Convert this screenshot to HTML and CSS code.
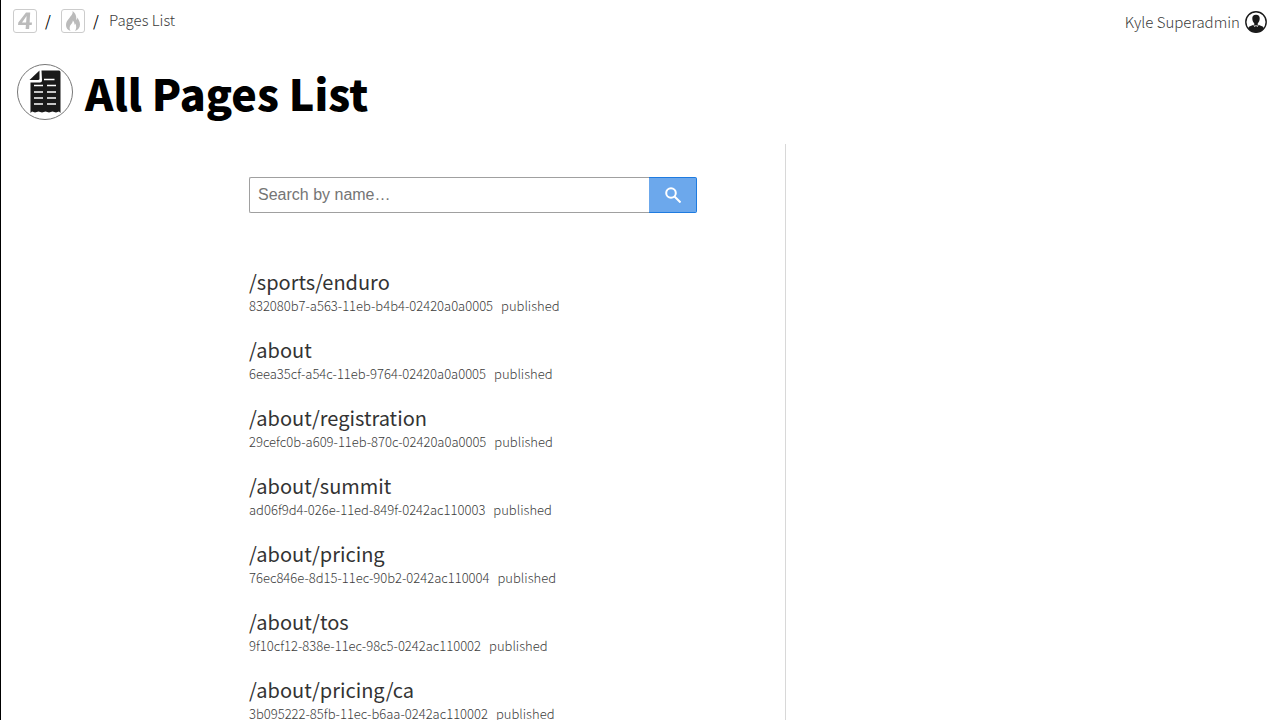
FILE: index.html
```html
<!DOCTYPE html>
<html lang="en">
<head>
<meta charset="utf-8">
<meta name="viewport" content="width=device-width, initial-scale=1">
<title>All Pages List</title>
<link rel="stylesheet" href="styles.css">
</head>
<body>
<header class="topbar">
  <nav class="breadcrumbs" aria-label="Breadcrumb">
    <a class="crumb-icon" href="#" aria-label="Home">
      <svg viewBox="0 0 22 22" aria-hidden="true"><path class="four" fill-rule="evenodd" d="M12 2.500H16.200L15.600 12.500H18L17.700 15H15.400L15.100 19H11.600L11.900 15H4L4.300 12.500zM12.600 6L8 12.500H12.100z"/></svg>
    </a>
    <span class="separator">/</span>
    <a class="crumb-icon" href="#" aria-label="Clay">
      <svg viewBox="1 1 22 22" aria-hidden="true"><path class="flame" d="M11.500 2c.8 3.200-1.800 5-3.300 7.200C6.500 11.200 5 13 5 16c0 3 1.600 5 4.500 6-1.500-2.500-1-5 .8-7 1-1.200 1.500-2.200 1.500-3.500 1.200 1.300 1.800 2.700 1.700 4.200.5-.4.800-.8.900-1.300 1.300 2.500 1 5.500-.4 7.600 3.100-1 5-3.500 5-6.500 0-2.800-1.500-4.800-2.500-7-.2 1.200-.5 2-1.200 2.500C15.500 7.500 15 4.500 11.500 2z"/></svg>
    </a>
    <span class="separator">/</span>
    <span class="crumb-text">Pages List</span>
  </nav>
  <a class="user" href="#">Kyle Superadmin
    <svg viewBox="0 0 22 22" aria-hidden="true"><circle cx="11" cy="11" r="10.200" fill="#fff" stroke="#1a1a1a" stroke-width="1.400"/><path fill="#1a1a1a" d="M11 3.700c2.500 0 3.900 1.600 3.700 4-.1 2.100-1 3.700-2 4.700v1.200l4.300 1.600c1 .4 1.400 1 1.600 2C16.800 19.800 14 21.200 11 21.200S5.200 19.800 3.400 17.200c.2-1 .6-1.600 1.600-2l4.300-1.600v-1.200c-1-1-1.900-2.600-2-4.700-.2-2.400 1.200-4 3.700-4z"/><path fill="none" stroke="#fff" stroke-width=".8" d="M8.500 13.200l1 2.300 1.500-1 1.500 1 1-2.300"/></svg>
  </a>
</header>
<div class="page-title">
  <svg viewBox="0 0 56 56" aria-hidden="true">
    <circle cx="28" cy="28" r="27.500" fill="#fff" stroke="#777"/>
    <path fill="#1a1a1a" d="M24.500 6.500h17.500Q43.500 6.500 43.500 8.500V49l-1.500-1.500-3 1-3.500-1-3.500 1-3.500-1-3.500 1-3.500-1-3.500 1-3-1-1.500 1.500V18.500h9.500q2 0 2-2z"/>
    <path fill="#1a1a1a" d="M22.500 6.500V14.500q0 1.500-1.500 1.500H12.500z"/>
    <path fill="none" stroke="#fff" stroke-width="1.600" d="M27 15.500h10.500M17 21.500h9M30 21.500h9M17 28h9M30 28h9M17 34h9M30 34h9M17 40h9M30 40h9"/>
  </svg>
  <h1>All Pages List</h1>
</div>
<div class="layout">
  <main class="content">
    <form class="search" role="search">
      <input type="search" placeholder="Search by name…" aria-label="Search by name">
      <button type="button" aria-label="Search">
        <svg viewBox="0 0 16 16" aria-hidden="true"><circle cx="6" cy="6" r="4.800"/><path d="M9.500 9.500l6 6"/></svg>
      </button>
    </form>
    <ul class="pages">
      <li><a href="#">/sports/enduro</a><div class="meta"><span>832080b7-a563-11eb-b4b4-02420a0a0005</span><span>published</span></div></li>
      <li><a href="#">/about</a><div class="meta"><span>6eea35cf-a54c-11eb-9764-02420a0a0005</span><span>published</span></div></li>
      <li><a href="#">/about/registration</a><div class="meta"><span>29cefc0b-a609-11eb-870c-02420a0a0005</span><span>published</span></div></li>
      <li><a href="#">/about/summit</a><div class="meta"><span>ad06f9d4-026e-11ed-849f-0242ac110003</span><span>published</span></div></li>
      <li><a href="#">/about/pricing</a><div class="meta"><span>76ec846e-8d15-11ec-90b2-0242ac110004</span><span>published</span></div></li>
      <li><a href="#">/about/tos</a><div class="meta"><span>9f10cf12-838e-11ec-98c5-0242ac110002</span><span>published</span></div></li>
      <li><a href="#">/about/pricing/ca</a><div class="meta"><span>3b095222-85fb-11ec-b6aa-0242ac110002</span><span>published</span></div></li>
    </ul>
  </main>
  <aside class="sidebar"></aside>
</div>
</body>
</html>
```
FILE: styles.css
```css
* { box-sizing: border-box; }
html { height: 100%; }
body {
  display: flex;
  flex-direction: column;
  height: 100vh;
  margin: 0;
  overflow: hidden;
  border-left: 1px solid #000;
  background: #fff;
  color: #000;
  font-family: "Noto Sans CJK SC", sans-serif;
  font-size: 15px;
  line-height: 20px;
}
a { color: inherit; text-decoration: none; }
svg { display: block; flex: none; }
.topbar {
  display: flex;
  justify-content: space-between;
  align-items: center;
  flex: none;
  height: 44px;
  padding: 0 13px 0 12px;
}
.breadcrumbs { display: flex; align-items: center; gap: 8px; padding-bottom: 2px; }
.crumb-icon { width: 24px; height: 24px; border: 1px solid #ccc; border-radius: 3px; }
.crumb-icon svg { width: 22px; height: 22px; }
.four, .flame { fill: #bbb; }
.separator { width: 8px; }
.crumb-text, .user { color: #3c3c3c; font-weight: 300; }
.crumb-text { padding-bottom: 2px; }
.user { display: flex; align-items: center; gap: 5px; }
.user svg { width: 22px; height: 22px; }
.page-title {
  display: flex;
  align-items: center;
  flex: none;
  gap: 12px;
  height: 100px;
  padding: 0 16px 4px;
}
.page-title svg { width: 56px; height: 56px; }
h1 { margin: 0; font-size: 43px; font-weight: 900; line-height: 56px; }
.layout { display: flex; flex: 1; min-height: 0; }
.content { flex: 1; max-width: 785px; padding: 33px 88px 0 248px; overflow: hidden; border-right: 1px solid #d8d8d8; }
.sidebar { flex: 0 1 494px; }
.search { display: flex; height: 36px; }
.search input {
  flex: 1;
  min-width: 0;
  margin: 0;
  padding: 0 8px;
  border: 1px solid #a0a0a0;
  border-right: 0;
  border-radius: 2px 0 0 2px;
  background: #fff;
  font: 16px "Liberation Sans", Arial, sans-serif;
  appearance: none;
}
.search input::placeholder { color: #757575; }
.search button {
  display: flex;
  align-items: center;
  justify-content: center;
  width: 48px;
  padding: 0;
  border: 1px solid #1e7be0;
  border-left: 0;
  border-radius: 0 2px 2px 0;
  background: #6ca8ec;
}
.search button svg { width: 16px; height: 16px; fill: none; stroke: #fff; stroke-width: 2; }
.pages { margin: 0; padding: 54px 0 0; list-style: none; }
.pages li { height: 68px; }
.pages a { display: block; color: #333; font-size: 20px; line-height: 30px; }
.meta { display: flex; gap: 8px; color: #3c3c3c; font-size: 13px; font-weight: 300; line-height: 18px; }
```
